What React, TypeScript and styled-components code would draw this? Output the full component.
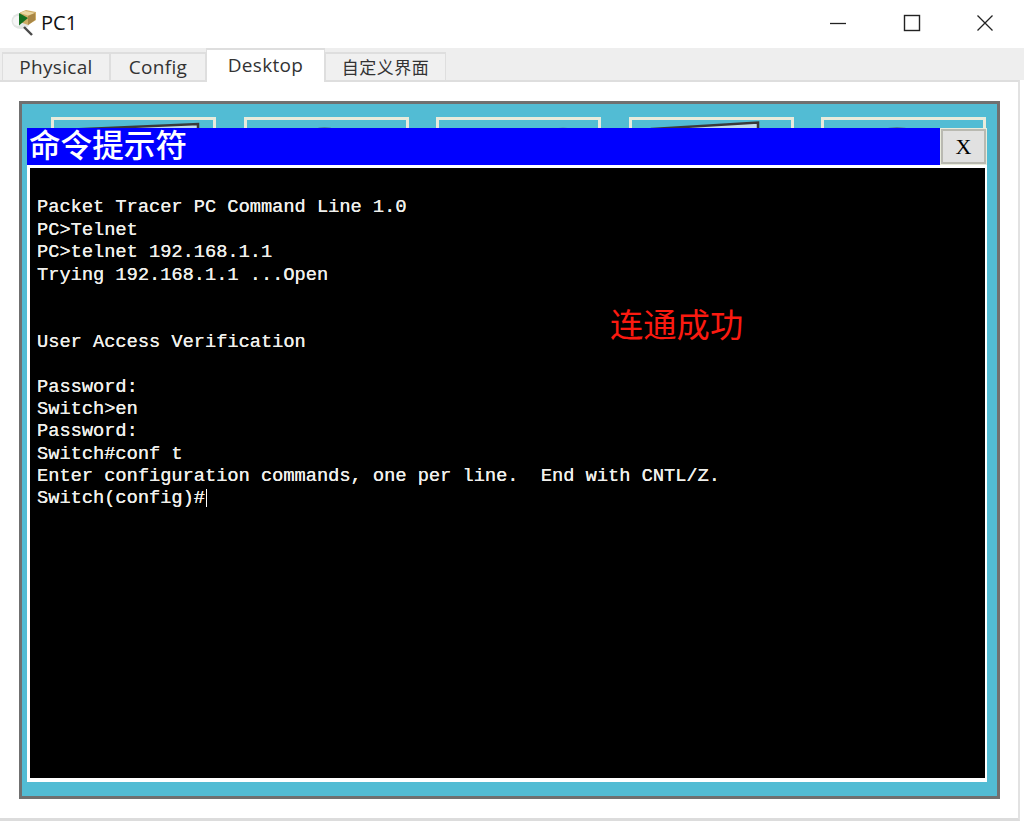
import styled, {createGlobalStyle} from 'styled-components';

const LINES = [
	'Packet Tracer PC Command Line 1.0',
	'PC>Telnet',
	'PC>telnet 192.168.1.1',
	'Trying 192.168.1.1 ...Open',
	'',
	'',
	'User Access Verification',
	'',
	'Password:',
	'Switch>en',
	'Password:',
	'Switch#conf t',
	'Enter configuration commands, one per line.  End with CNTL/Z.',
];

const TABS = [
	{label: 'Physical', width: 108},
	{label: 'Config', width: 96},
	{label: 'Desktop', width: 119},
	{label: '自定义界面', width: 121, cjk: true},
];

function AppIcon() {
	return (
		<svg width="26" height="26" viewBox="0 0 26 26">
			<ellipse cx="10" cy="11" rx="9.5" ry="8" fill="#e3e5e3" />
			<ellipse cx="7" cy="11" rx="5" ry="5" fill="#f6f6f6" />
			<path d="M13 17l8 8" stroke="#4a4a4a" strokeWidth="2.4" fill="none" />
			<path d="M9 2.5L15 0l10 2v8l-8 5-8-3z" fill="#cfae68" />
			<path d="M14 1l10 2-7 2.5L9 3z" fill="#e9d7a3" />
			<path d="M17 6l7-3v7l-7 5z" fill="#a98746" />
			<path d="M8 3l9 5-9 7.500z" fill="#12701f" />
		</svg>
	);
}

function WindowButtons() {
	return (
		<Controls>
			<svg width="18" height="18" viewBox="0 0 18 18">
				<path d="M1 9.500h16" stroke="#222" strokeWidth="1.3" />
			</svg>
			<svg width="18" height="18" viewBox="0 0 18 18">
				<rect x="1.500" y="1.500" width="15" height="15" stroke="#222" strokeWidth="1.400" fill="none" />
			</svg>
			<svg width="18" height="18" viewBox="0 0 18 18">
				<path d="M1.500 1.500l15 15M16.500 1.500l-15 15" stroke="#222" strokeWidth="1.300" fill="none" />
			</svg>
		</Controls>
	);
}

function App() {
	return (
		<>
			<GlobalStyle />
			<Window>
				<TitleBar>
					<AppIcon />
					<WindowTitle>PC1</WindowTitle>
					<WindowButtons />
				</TitleBar>
				<TabStrip>
					{TABS.map(tab => (
						<Tab key={tab.label} $active={tab.label === 'Desktop'} $width={tab.width} $cjk={tab.cjk}>
							{tab.label}
						</Tab>
					))}
				</TabStrip>
				<Pane>
					<Screen>
						<IconRow>
							<DesktopIcon>
								<svg width="165" height="24" viewBox="0 0 165 24">
									<path d="M22 12.500L147 7v17H22z" fill="#c3dcea" stroke="#3a3a3a" strokeWidth="2.500" />
								</svg>
							</DesktopIcon>
							<DesktopIcon>
								<svg width="165" height="24" viewBox="0 0 165 24">
									<path d="M60 14q20-7 42 0v10H60z" fill="#3b5a66" />
								</svg>
							</DesktopIcon>
							<DesktopIcon>
								<svg width="165" height="24" viewBox="0 0 165 24">
									<path d="M118 12q9-3 18 0v12h-18z" fill="#4a96ab" />
								</svg>
							</DesktopIcon>
							<DesktopIcon>
								<svg width="165" height="24" viewBox="0 0 165 24">
									<path d="M23 12L129 5.500V24H23z" fill="#c3dcea" stroke="#3a3a3a" strokeWidth="2.500" />
								</svg>
							</DesktopIcon>
							<DesktopIcon>
								<svg width="165" height="24" viewBox="0 0 165 24">
									<path d="M60 13q16-6 32 0v11H60z" fill="#4b8194" />
								</svg>
							</DesktopIcon>
						</IconRow>
						<Dialog>
							<DialogHeader>
								<DialogTitle>命令提示符</DialogTitle>
								<CloseButton>X</CloseButton>
							</DialogHeader>
							<Terminal>
								<TerminalLine />
								{LINES.map((line, index) => (
									<TerminalLine key={index}>{line}</TerminalLine>
								))}
								<TerminalLine>
									Switch(config)#
									<Cursor />
								</TerminalLine>
								<Note>连通成功</Note>
							</Terminal>
						</Dialog>
					</Screen>
				</Pane>
			</Window>
		</>
	);
}

export default App;

const GlobalStyle = createGlobalStyle`
	html, body {
		margin: 0;
		background: #fff;
	}
	* {
		box-sizing: border-box;
	}
`;

const Window = styled.div`
	width: 1024px;
	height: 822px;
	display: flex;
	flex-direction: column;
	overflow: hidden;
	background: #fff;
	font-family: "Open Sans", "Noto Sans CJK SC", sans-serif;
	color: #222;
`;

const TitleBar = styled.div`
	height: 48px;
	flex: none;
	display: flex;
	align-items: center;
	padding: 0 30px 3px 11px;
	gap: 4px;
`;

const WindowTitle = styled.span`
	font-size: 20px;
	flex: 1;
	color: #111;
`;

const Controls = styled.div`
	display: flex;
	align-items: center;
	gap: 55.5px;
`;

const TabStrip = styled.div`
	height: 32px;
	flex: none;
	display: flex;
	align-items: flex-start;
	padding-left: 2px;
	background: #eeeeee;
	position: relative;
	z-index: 1;
`;

const Tab = styled.div<{$active?: boolean; $width: number; $cjk?: boolean}>`
	width: ${props => props.$width}px;
	height: ${props => (props.$active ? '34px' : '30px')};
	margin-top: ${props => (props.$active ? '0' : '4px')};
	padding-bottom: ${props => (props.$active ? '2px' : props.$cjk ? '2px' : '0')};
	display: flex;
	align-items: center;
	justify-content: center;
	font-size: ${props => (props.$cjk ? '17px' : '19px')};
	letter-spacing: ${props => (props.$cjk ? '0.5px' : '0.3px')};
	color: #333;
	background: ${props => (props.$active ? '#fff' : '#f0f0f0')};
	border: 1px solid #dedede;
	border-top-width: 2px;
	border-bottom: ${props => (props.$active ? 'none' : '2px solid #dedede')};
`;

const Pane = styled.div`
	flex: 1;
	width: 1020px;
	margin-bottom: 1px;
	padding: 19px 19px 0;
	border-top: 2px solid #dedede;
	border-right: 2px solid #e2e2e2;
	border-bottom: 3px solid #dcdcdc;
`;

const Screen = styled.div`
	position: relative;
	width: 981px;
	height: 698px;
	background: #52bcd4;
	border: 3px solid #707070;
	padding: 13px 0 0 29px;
`;

const IconRow = styled.div`
	display: flex;
	gap: 27.500px;
`;

const DesktopIcon = styled.div`
	width: 165px;
	height: 24px;
	border: 3px solid #e8ebdc;
	border-bottom: none;
	overflow: hidden;
	svg {
		display: block;
		margin: -3px 0 0 -3px;
	}
`;

const Dialog = styled.div`
	position: absolute;
	left: 5px;
	top: 24px;
	width: 960px;
	height: 654px;
	display: flex;
	flex-direction: column;
	background: #fff;
`;

const DialogHeader = styled.div`
	height: 37px;
	flex: none;
	display: flex;
	background: #0000ff;
`;

const DialogTitle = styled.div`
	flex: 1;
	padding-left: 2px;
	font-family: "Liberation Serif", "Noto Sans CJK SC", serif;
	font-size: 31.600px;
	font-weight: 500;
	line-height: 37px;
	color: #fff;
`;

const CloseButton = styled.div`
	width: 47px;
	display: flex;
	align-items: center;
	justify-content: center;
	background: #e1e1e1;
	border: 1px solid #e8ebdc;
	box-shadow: inset 0 0 0 2px #b9b9b1;
	font-family: "Liberation Serif", serif;
	font-size: 22px;
	color: #000;
`;

const Terminal = styled.div`
	position: relative;
	flex: 1;
	margin: 3px 2px 4px 3px;
	padding: 6px 0 0 7px;
	background: #000;
	color: #f0f0ec;
	font-family: "Liberation Mono", "Courier New", monospace;
	font-size: 18.670px;
	line-height: 22.400px;
	text-shadow: 0.12px 0 0 #f0f0ec;
`;

const TerminalLine = styled.div`
	height: 22.400px;
	white-space: pre;
`;

const Cursor = styled.span`
	display: inline-block;
	width: 1.500px;
	height: 18px;
	margin-left: 1px;
	vertical-align: -4px;
	background: #fff;
`;

const Note = styled.div`
	position: absolute;
	left: 580px;
	top: 133px;
	font-family: "Noto Sans CJK SC", sans-serif;
	font-size: 33.300px;
	line-height: 44px;
	text-shadow: none;
	color: #fb1a10;
`;
